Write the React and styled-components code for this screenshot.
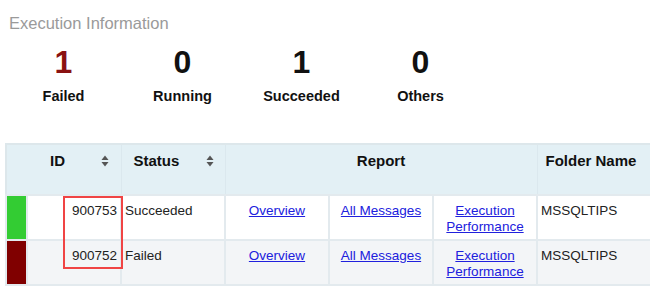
import React from "react";
import styled, { createGlobalStyle } from "styled-components";

const Global = createGlobalStyle`
  html, body { margin: 0; padding: 0; background: #ffffff; overflow: hidden; }
  body { font-family: "Liberation Sans", Arial, sans-serif; color: #111; }
`;

const Page = styled.div`
  width: 650px;
  height: 294px;
  padding-top: 13px;
  box-sizing: border-box;
`;

const Title = styled.div`
  margin-left: 9px;
  font-size: 16.5px;
  line-height: 20px;
  color: #9a9a9a;
`;

const Stats = styled.div`
  display: flex;
  margin-top: 11px;
  padding-left: 4px;
`;

const Stat = styled.div`
  width: 119px;
  display: flex;
  flex-direction: column;
  align-items: center;
`;

const StatValue = styled.div`
  font-size: 32px;
  font-weight: bold;
  line-height: 36px;
  color: ${(p) => (p.$alert ? "#8a1212" : "#111")};
`;

const StatLabel = styled.div`
  margin-top: 7px;
  font-size: 14.5px;
  font-weight: bold;
  line-height: 18px;
  color: #111;
`;

const TableWrap = styled.div`
  position: relative;
  margin-top: 38px;
  margin-left: 5px;
`;

const Table = styled.table`
  border-collapse: collapse;
  table-layout: fixed;
  width: 661px;
  border: 2px solid #dde7eb;
`;

const HeadRow = styled.tr`
  background: #e3f0f5;
  height: 51px;
`;

const Th = styled.th`
  border-left: 1px solid #dbe8ee;
  border-right: 1px solid #dbe8ee;
  padding: 7px ${(p) => p.$pr || 0}px 0 ${(p) => p.$pl || 0}px;
  vertical-align: top;
  text-align: ${(p) => p.$align || "left"};
  font-size: 15px;
  font-weight: bold;
  line-height: 18px;
  color: #111;
`;

const HeadInner = styled.div`
  display: flex;
  justify-content: space-between;
  align-items: center;
`;

const Row = styled.tr`
  background: ${(p) => (p.$alt ? "#f3f5f7" : "#ffffff")};
  height: 45px;
`;

const Td = styled.td`
  border: 2px solid #e3eaee;
  padding: 7px 3px 0 3px;
  vertical-align: top;
  text-align: ${(p) => p.$align || "left"};
  font-size: 13.5px;
  line-height: 16px;
  color: #222;
`;

const ColorCell = styled.td`
  border: 2px solid #e3eaee;
  padding: 0;
  background: ${(p) => p.$color};
`;

const Link = styled.a`
  color: #2020dd;
  text-decoration: underline;
  cursor: pointer;
`;

const Highlight = styled.div`
  position: absolute;
  left: 58px;
  top: 53px;
  width: 60px;
  height: 73px;
  box-sizing: border-box;
  border: 2px solid #f04444;
  pointer-events: none;
`;

const SortIcon = () => (
  <svg width="8" height="12" viewBox="0 0 8 12">
    <path d="M4 0.5 L7.5 5 L0.5 5 Z" fill="#555" />
    <path d="M4 11.5 L7.5 7 L0.5 7 Z" fill="#555" />
  </svg>
);

const stats = [
  { value: 1, label: "Failed", alert: true },
  { value: 0, label: "Running" },
  { value: 1, label: "Succeeded" },
  { value: 0, label: "Others" },
];

const rows = [
  { id: "900753", status: "Succeeded", color: "#33cc33" },
  { id: "900752", status: "Failed", color: "#800000" },
];

export default function App() {
  return (
    <>
      <Global />
      <Page>
        <Title>Execution Information</Title>
        <Stats>
          {stats.map((s) => (
            <Stat key={s.label}>
              <StatValue $alert={s.alert}>{s.value}</StatValue>
              <StatLabel>{s.label}</StatLabel>
            </Stat>
          ))}
        </Stats>
        <TableWrap>
          <Table>
            <colgroup>
              <col style={{ width: 21 }} />
              <col style={{ width: 94 }} />
              <col style={{ width: 104 }} />
              <col style={{ width: 104 }} />
              <col style={{ width: 104 }} />
              <col style={{ width: 104 }} />
              <col style={{ width: 130 }} />
            </colgroup>
            <thead>
              <HeadRow>
                <Th colSpan={2} $pl={43} $pr={12}>
                  <HeadInner>
                    <span>ID</span>
                    <SortIcon />
                  </HeadInner>
                </Th>
                <Th $pl={12} $pr={11}>
                  <HeadInner>
                    <span>Status</span>
                    <SortIcon />
                  </HeadInner>
                </Th>
                <Th colSpan={3} $align="center">
                  Report
                </Th>
                <Th $pl={8}>Folder Name</Th>
              </HeadRow>
            </thead>
            <tbody>
              {rows.map((r, i) => (
                <Row key={r.id} $alt={i % 2 === 1}>
                  <ColorCell $color={r.color} />
                  <Td $align="right">{r.id}</Td>
                  <Td>{r.status}</Td>
                  <Td $align="center">
                    <Link>Overview</Link>
                  </Td>
                  <Td $align="center">
                    <Link>All Messages</Link>
                  </Td>
                  <Td $align="center">
                    <Link>
                      Execution
                      <br />
                      Performance
                    </Link>
                  </Td>
                  <Td>MSSQLTIPS</Td>
                </Row>
              ))}
            </tbody>
          </Table>
          <Highlight />
        </TableWrap>
      </Page>
    </>
  );
}
